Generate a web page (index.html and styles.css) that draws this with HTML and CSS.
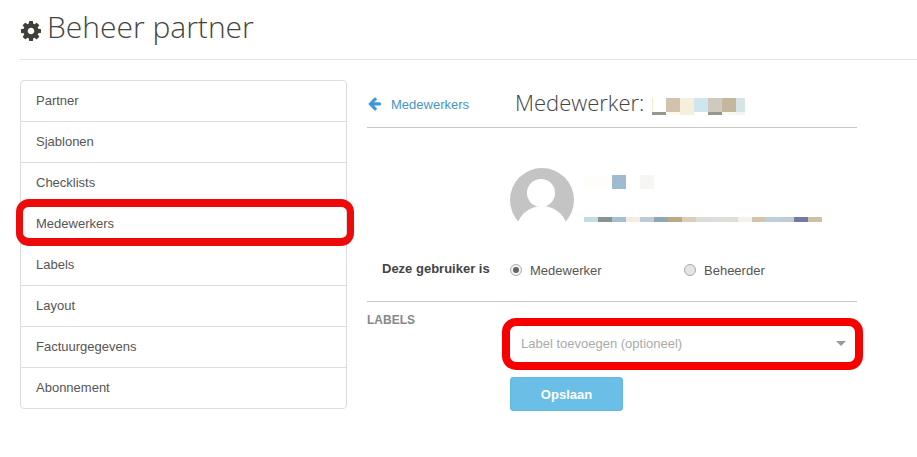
FILE: index.html
```html
<!DOCTYPE html>
<html lang="nl">
<head>
    <meta charset="UTF-8">
    <title>Beheer partner</title>
    <link rel="stylesheet" href="styles.css">
</head>
<body>
    <header class="page-head">
        <h1>
            <svg class="gear" viewBox="0 0 1536 1536"><path fill-rule="evenodd" d="M1024 768q0-106-75-181t-181-75-181 75-75 181 75 181 181 75 181-75 75-181zm512-109v222q0 12-8 23t-20 13l-185 28q-19 54-39 91 35 50 107 138 10 12 10 25t-9 23q-27 37-99 108t-94 71q-12 0-26-9l-138-108q-44 23-91 38-16 136-29 186-7 28-36 28h-222q-14 0-24.500-8.500t-11.500-21.500l-28-184q-49-16-90-37l-141 107q-10 9-25 9-14 0-25-11-126-114-165-168-7-10-7-23 0-12 8-23 15-21 51-66.500t54-70.500q-27-50-41-99l-183-27q-13-2-21-12.500t-8-23.500v-222q0-12 8-23t19-13l186-28q14-46 39-92-40-57-107-138-10-12-10-24 0-10 9-23 26-36 98.500-107.500t94.500-71.500q13 0 26 10l138 107q44-23 91-38 16-136 29-186 7-28 36-28h222q14 0 24.500 8.500t11.500 21.500l28 184q49 16 90 37l142-107q9-9 24-9 13 0 25 10 129 119 165 170 7 8 7 22 0 12-8 23-15 21-51 66.500t-54 70.500q26 50 41 98l183 28q13 2 21 12.500t8 23.500z"/></svg>
            Beheer partner
        </h1>
    </header>

    <main class="layout">
        <ul class="side-menu">
            <li><a href="#">Partner</a></li>
            <li><a href="#">Sjablonen</a></li>
            <li><a href="#">Checklists</a></li>
            <li class="marked"><a href="#">Medewerkers</a></li>
            <li><a href="#">Labels</a></li>
            <li><a href="#">Layout</a></li>
            <li><a href="#">Factuurgegevens</a></li>
            <li><a href="#">Abonnement</a></li>
        </ul>

        <section class="detail">
            <div class="detail-head">
                <a class="back-link" href="#">
                    <svg class="arrow" viewBox="0 0 1792 1792"><path d="M1664 896v128q0 53-32.500 90.500t-84.500 37.500h-704l293 294q38 36 38 90t-38 90l-75 76q-38 38-90 38-53 0-91-38l-651-652q-38-36-38-90 0-53 38-91l651-650q37-38 91-38 53 0 90 38l75 74q38 38 38 91t-38 91l-293 293h704q52 0 84.500 37.500t32.500 90.500z" transform="translate(0 -128)"/></svg>
                    Medewerkers
                </a>
                <h2>Medewerker:</h2>
                <svg class="blur-title" width="94" height="17" viewBox="0 0 94 17">
                    <rect x="0" y="0" width="1" height="14" fill="#f8efc8"/>
                    <rect x="0" y="14" width="14" height="3" fill="#979792"/>
                    <rect x="14" y="0" width="14" height="14" fill="#d3c3ae"/>
                    <rect x="14" y="14" width="14" height="3" fill="#fdfaf2"/>
                    <rect x="28" y="0" width="14" height="17" fill="#f5efdc"/>
                    <rect x="42" y="0" width="14" height="14" fill="#cfe5ef"/>
                    <rect x="56" y="0" width="14" height="14" fill="#d0c9bf"/>
                    <rect x="56" y="14" width="14" height="3" fill="#979790"/>
                    <rect x="70" y="0" width="14" height="14" fill="#c3b79e"/>
                    <rect x="70" y="14" width="14" height="3" fill="#fbf8f0"/>
                    <rect x="84" y="0" width="9" height="14" fill="#d7e4e6"/>
                    <rect x="84" y="14" width="9" height="3" fill="#f1f7f8"/>
                </svg>
            </div>

            <div class="user-card">
                <svg class="avatar" width="64" height="64" viewBox="0 0 64 64">
                    <circle cx="32" cy="32" r="32" fill="#c4c4c4"/>
                    <circle cx="31" cy="25" r="14" fill="#fff"/>
                    <ellipse cx="32" cy="64" rx="26" ry="26" fill="#fff"/>
                </svg>
                <div class="user-info">
                    <svg class="blur-name" width="70" height="14" viewBox="0 0 70 14">
                        <rect x="0" y="0" width="28" height="14" fill="#fefdfa"/>
                        <rect x="28" y="0" width="14" height="14" fill="#9fbbcf"/>
                        <rect x="56" y="0" width="14" height="14" fill="#f6f6f4"/>
                    </svg>
                    <svg class="blur-mail" width="238" height="5" viewBox="0 0 238 5">
                        <rect x="0" width="14" height="5" fill="#c3dcdf"/>
                        <rect x="14" width="14" height="5" fill="#879493"/>
                        <rect x="28" width="14" height="5" fill="#a5bfd0"/>
                        <rect x="42" width="14" height="5" fill="#f5ebe0"/>
                        <rect x="56" width="14" height="5" fill="#bccad4"/>
                        <rect x="70" width="14" height="5" fill="#8da7b5"/>
                        <rect x="84" width="14" height="5" fill="#bba984"/>
                        <rect x="98" width="14" height="5" fill="#dccdb6"/>
                        <rect x="112" width="14" height="5" fill="#dddcd6"/>
                        <rect x="126" width="14" height="5" fill="#dadfdd"/>
                        <rect x="140" width="14" height="5" fill="#dfddd4"/>
                        <rect x="154" width="14" height="5" fill="#f4f2ea"/>
                        <rect x="168" width="14" height="5" fill="#d1c5ab"/>
                        <rect x="182" width="14" height="5" fill="#bcd0da"/>
                        <rect x="196" width="14" height="5" fill="#c0ccd2"/>
                        <rect x="210" width="14" height="5" fill="#7378a4"/>
                        <rect x="224" width="14" height="5" fill="#cfc0a2"/>
                    </svg>
                </div>
            </div>

            <div class="role-row">
                <span class="role-label">Deze gebruiker is</span>
                <label class="radio radio-first"><span class="dot checked"></span>Medewerker</label>
                <label class="radio"><span class="dot"></span>Beheerder</label>
            </div>

            <div class="labels-row">
                <span class="labels-title">LABELS</span>
                <div class="labels-form">
                    <div class="select marked-select">
                        <span>Label toevoegen (optioneel)</span>
                        <i class="caret"></i>
                    </div>
                    <button type="button">Opslaan</button>
                </div>
            </div>
        </section>
    </main>
</body>
</html>
```

FILE: styles.css
```css
body {
    margin: 0;
    background: #fff;
    color: #555;
    font-family: "Liberation Sans", Arial, sans-serif;
    font-size: 13px;
}
.page-head {
    margin-left: 20px;
    height: 59px;
    border-bottom: 1px solid #e4e4e4;
}
h1 {
    margin: 0;
    padding-top: 7px;
    display: flex;
    align-items: center;
    gap: 6px;
    font-family: "Open Sans", sans-serif;
    font-weight: 300;
    font-size: 30px;
    line-height: 40px;
    color: #44443e;
}
.gear {
    width: 20px;
    height: 20px;
    margin: 8px 0 0 1px;
    fill: #40403a;
}
.layout {
    display: flex;
    align-items: flex-start;
    gap: 20px;
    padding: 20px 0 0 20px;
}
.side-menu {
    list-style: none;
    margin: 0;
    padding: 0;
    width: 325px;
    border: 1px solid #ddd;
    border-radius: 4px;
}
.side-menu li {
    position: relative;
    height: 40px;
    border-bottom: 1px solid #ddd;
}
.side-menu li:last-child {
    height: 40px;
    border-bottom: none;
}
.side-menu a {
    display: block;
    padding-left: 15px;
    line-height: 40px;
    color: #555;
    text-decoration: none;
}
.marked::after {
    content: "";
    position: absolute;
    left: -5px;
    right: -8px;
    top: -5px;
    bottom: -2px;
    border-style: solid;
    border-color: #ee0a0a;
    border-width: 8px 7px;
    border-radius: 13px;
}
.detail {
    width: 490px;
}
.detail-head {
    display: flex;
    align-items: center;
    height: 47px;
    border-bottom: 1px solid #c8c8c8;
}
.back-link {
    display: flex;
    align-items: center;
    gap: 9px;
    width: 148px;
    margin-top: 1px;
    box-sizing: border-box;
    font-size: 13px;
    color: #4596c2;
    text-decoration: none;
}
.arrow {
    width: 15px;
    height: 15px;
    fill: #3a9ad9;
}
h2 {
    margin: 0 8px 3px 0;
    font-family: "Open Sans", sans-serif;
    font-weight: 300;
    font-size: 22px;
    color: #444;
}
.blur-title {
    margin-top: 5px;
}
.user-card {
    display: flex;
    gap: 10px;
    margin: 40px 0 0 143px;
    height: 64px;
}
.user-info {
    display: flex;
    flex-direction: column;
    gap: 28px;
    padding-top: 7px;
}
.user-info svg {
    display: block;
}
.role-row {
    display: flex;
    align-items: center;
    height: 62px;
    margin-top: 7px;
    border-bottom: 1px solid #c8c8c8;
}
.role-label {
    width: 143px;
    padding: 0 0 3px 15px;
    box-sizing: border-box;
    font-weight: bold;
    color: #444;
}
.radio {
    display: flex;
    align-items: center;
    gap: 8px;
}
.radio-first {
    width: 174px;
}
.dot {
    width: 10px;
    height: 10px;
    border: 1px solid #aaa;
    border-radius: 50%;
    background: #e4e4e4;
    position: relative;
}
.dot.checked {
    background: #f4f4f4;
}
.dot.checked::after {
    content: "";
    position: absolute;
    left: 2px;
    top: 2px;
    width: 6px;
    height: 6px;
    border-radius: 50%;
    background: #666;
}
.labels-row {
    display: flex;
}
.labels-title {
    width: 143px;
    padding-top: 11px;
    font-size: 12px;
    font-weight: bold;
    color: #888;
}
.labels-form {
    flex: 1;
    padding-top: 23px;
}
.select {
    position: relative;
    display: flex;
    align-items: center;
    justify-content: space-between;
    height: 36px;
    padding: 0 11px;
    color: #aaa;
    font-size: 13px;
}
.marked-select::after {
    content: "";
    position: absolute;
    left: -8px;
    right: -6px;
    top: -7px;
    bottom: -9px;
    border: 8px solid #f80000;
    border-radius: 14px;
}
.caret {
    width: 0;
    height: 0;
    margin-right: 0;
    border-left: 5px solid transparent;
    border-right: 5px solid transparent;
    border-top: 5px solid #999;
}
button {
    display: block;
    width: 113px;
    height: 34px;
    margin-top: 16px;
    border: 1px solid #63b8e0;
    border-radius: 3px;
    background: #6bbee6;
    color: #fff;
    font-family: inherit;
    font-size: 13px;
    font-weight: bold;
}
```
